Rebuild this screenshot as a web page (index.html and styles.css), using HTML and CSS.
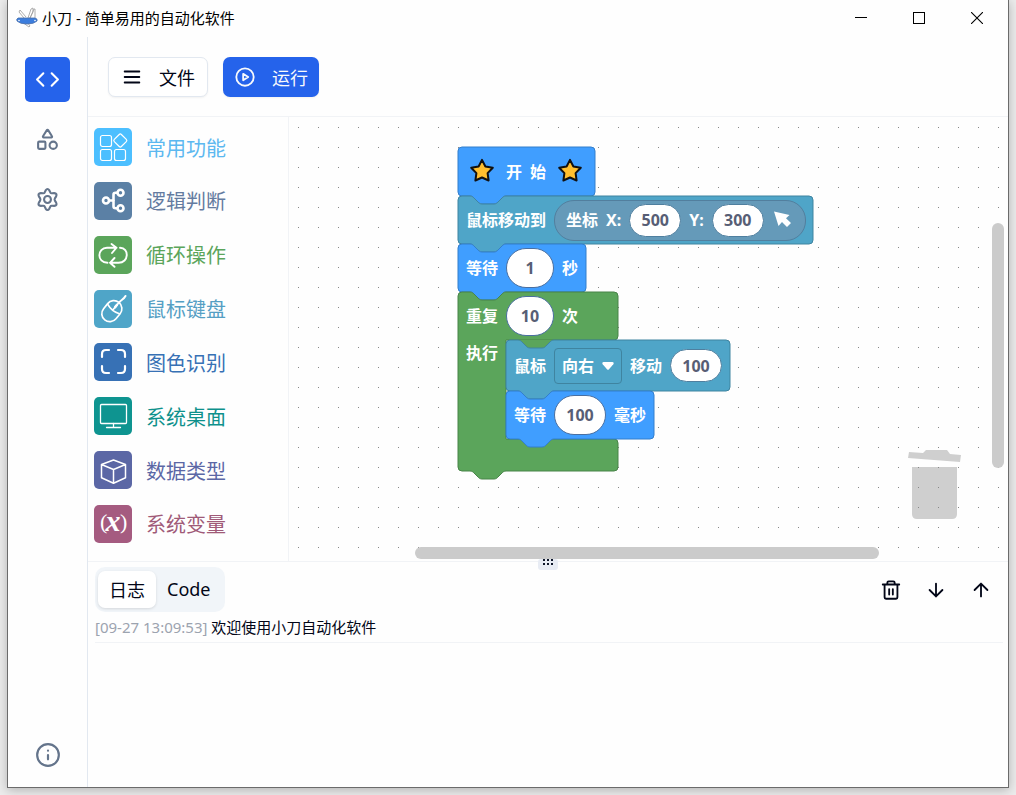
FILE: index.html
```html
<!DOCTYPE html>
<html lang="zh-CN">
<head>
    <meta charset="UTF-8">
    <meta name="viewport" content="width=device-width, initial-scale=1.0">
    <title>小刀 - 简单易用的自动化软件</title>
    <link rel="stylesheet" href="styles.css">
</head>
<body>
    <div class="window">
        <header class="titlebar">
            <svg class="logo" width="22" height="22" viewBox="0 0 22 22" fill="none" stroke="#999" stroke-width=".8">
                <path d="M8 11 3 5l1-2 6 7M12 11l3-9 2-1v4l-3 6M14 11l4-9h1v9M6 15l7 5 1-1-3-4" fill="#fff"/>
                <path d="M2 11h17q3 1 2 3-3 3-10 3T1 14q-1-2 1-3z" fill="#3b7ddd" stroke="#4a6fa8"/>
                <circle cx="3" cy="13.500" r=".8" fill="#fff" stroke="none"/>
                <circle cx="19" cy="13.500" r=".8" fill="#fff" stroke="none"/>
            </svg>
            <span class="title">小刀 - 简单易用的自动化软件</span>
            <div class="window-buttons">
                <button aria-label="最小化"><svg width="12" height="12" viewBox="0 0 12 12"><path d="M0 5h12v1H0z" fill="#000"/></svg></button>
                <button aria-label="最大化"><svg width="12" height="12" viewBox="0 0 12 12"><path d="M0 0h12v12H0zM1 1v10h10V1z" fill="#000" fill-rule="evenodd"/></svg></button>
                <button aria-label="关闭"><svg width="12" height="12" viewBox="0 0 12 12"><path d="M0 0l12 12M12 0 0 12" stroke="#000" stroke-width="1.1"/></svg></button>
            </div>
        </header>

        <div class="main">
            <nav class="rail">
                <button class="rail-button active" aria-label="代码">
                    <svg width="25" height="25" viewBox="0 0 24 24"><path d="m16 18 6-6-6-6M8 6l-6 6 6 6"/></svg>
                </button>
                <button class="rail-button" aria-label="组件">
                    <svg width="25" height="25" viewBox="0 0 24 24"><path d="M8.300 10a.7.7 0 0 1-.626-1.079L11.400 3a.7.7 0 0 1 1.198-.043L16.300 8.900a.7.7 0 0 1-.572 1.100Z"/><rect x="3" y="14" width="7" height="7" rx="1"/><circle cx="17.500" cy="17.500" r="3.500"/></svg>
                </button>
                <button class="rail-button" aria-label="设置">
                    <svg width="25" height="25" viewBox="0 0 24 24"><path d="M10.200 3.300Q12 .6 13.800 3.300L14.700 5.200Q15.200 6.100 16.300 6L18.400 5.900Q21.600 6.200 20.300 9L19.100 10.900Q18.500 12 19.100 13.100L20.300 15Q21.600 17.800 18.400 18.100L16.300 18Q15.200 17.900 14.700 18.800L13.800 20.700Q12 23.400 10.200 20.700L9.300 18.800Q8.800 17.900 7.700 18L5.600 18.100Q2.400 17.800 3.700 15L4.900 13.100Q5.500 12 4.900 10.900L3.700 9Q2.400 6.200 5.600 5.900L7.700 6Q8.800 6.100 9.300 5.200z"/><circle cx="12" cy="12" r="3.300"/></svg>
                </button>
                <button class="rail-button info" aria-label="关于">
                    <svg width="26" height="26" viewBox="0 0 24 24"><circle cx="12" cy="12" r="10"/><path d="M12 16v-4M12 8h.01"/></svg>
                </button>
            </nav>

            <div class="content">
                <div class="toolbar">
                    <button class="btn">
                        <svg width="22" height="22" viewBox="0 0 24 24"><path d="M4 6h16M4 12h16M4 18h16"/></svg>
                        文件
                    </button>
                    <button class="btn primary">
                        <svg width="22" height="22" viewBox="0 0 24 24"><circle cx="12" cy="12" r="9.500"/><path d="m10 8.500 5.500 3.500-5.500 3.500z"/></svg>
                        运行
                    </button>
                </div>

                <div class="editor">
                    <ul class="toolbox">
                        <li class="common">
                            <svg width="38" height="38" viewBox="0 0 38 38" stroke-width="1.200"><rect x="6.500" y="7.500" width="11" height="11" rx="2"/><rect x="21.300" y="7.500" width="10" height="10" rx="1.500" transform="rotate(45 26.300 12.500)"/><rect x="6.500" y="21.500" width="11" height="11" rx="2"/><rect x="20.500" y="21.500" width="11" height="11" rx="2"/></svg>
                            常用功能
                        </li>
                        <li class="logic">
                            <svg width="38" height="38" viewBox="0 0 38 38" stroke-width="2.600"><circle cx="12" cy="18.500" r="3"/><circle cx="26.500" cy="10.800" r="3"/><circle cx="26.500" cy="26.300" r="3"/><path d="M15.200 18.500h4.500M23 10.800h-1.500q-2 0-2 2v11.500q0 2 2 2H23"/></svg>
                            逻辑判断
                        </li>
                        <li class="loop">
                            <svg width="38" height="38" viewBox="0 0 38 38" stroke-width="1.900"><path d="M13.500 26.800C2.500 26.800 3 11.700 13 11.700h9.500M17.500 8l5 3.700-4.500 5.300M26 11.700c9.500.3 9 15.100-1.500 15.100H16M20.500 22 16 26.800l4.500 4"/></svg>
                            循环操作
                        </li>
                        <li class="mouse">
                            <svg width="38" height="38" viewBox="0 0 38 38" stroke-width="1.700"><g transform="rotate(39 18 21)"><rect x="10" y="10" width="16" height="22.500" rx="8"/><path d="M10.500 18.500q7.500 3 15 0M18 10v10"/><path d="M18 13v3" stroke-width="2.500"/></g><path d="M25 13c1-3 4.500-3 6.500-7" stroke-width="2"/></svg>
                            鼠标键盘
                        </li>
                        <li class="image">
                            <svg width="38" height="38" viewBox="0 0 38 38" stroke-width="2.200"><path d="M8 14v-3q0-4 4-4h3M24 7h3q4 0 4 4v3M31 23v3q0 4-4 4h-3M15 30h-3q-4 0-4-4v-3"/></svg>
                            图色识别
                        </li>
                        <li class="desktop">
                            <svg width="38" height="38" viewBox="0 0 38 38" stroke-width="1.300"><rect x="6.500" y="7.500" width="26" height="19" rx="1"/><path d="M19.500 26.500v3M12.500 30.500h14"/></svg>
                            系统桌面
                        </li>
                        <li class="data">
                            <svg width="38" height="38" viewBox="0 0 38 38" stroke-width="1.500"><path d="M19.500 9 31.500 13.500v13.200L19.500 32.200 7.500 26.700V13.500zM7.500 13.500l12 5 12-5M19.500 18.500v13.500"/></svg>
                            数据类型
                        </li>
                        <li class="variable">
                            <svg width="38" height="38" viewBox="0 0 38 38"><text class="paren" x="6" y="24">(</text><text class="letter" x="19" y="26">x</text><text class="paren" x="26" y="24">)</text></svg>
                            系统变量
                        </li>
                    </ul>

                    <div class="workspace">
                        <svg class="trash" width="54" height="72" viewBox="0 0 54 72">
                            <path d="M1 4 15 5l3-3h21l3 4 11 1-1 7L0 10z"/>
                            <path d="M4 19h45v47q0 5-5 5H9q-5 0-5-5z"/>
                        </svg>
                        <svg class="grid" width="100%" height="100%">
                            <defs><pattern id="dots" width="20" height="20" patternUnits="userSpaceOnUse"><rect x="9" y="10" width="1" height="1" fill="#888"/></pattern></defs>
                            <rect width="100%" height="100%" fill="url(#dots)"/>
                        </svg>

                        <div class="program">
                            <!-- block outlines, the fields are laid over them -->
                            <svg class="shapes" width="360" height="340" viewBox="0 0 360 340">
                                <path fill="#409eff" stroke="#337ecc" d="M0 4a4 4 0 0 1 4-4H133a4 4 0 0 1 4 4V45a4 4 0 0 1-4 4H48c-2 0-3 1-4 2l-4 4c-1 1-2 2-4 2h-12c-2 0-3-1-4-2l-4-4c-1-1-2-2-4-2H4a4 4 0 0 1-4-4z"/>
                                <path fill="#4fa5c8" stroke="#3f84a0" d="M0 53a4 4 0 0 1 4-4H12c2 0 3 1 4 2l4 4c1 1 2 2 4 2h12c2 0 3-1 4-2l4-4c1-1 2-2 4-2H351a4 4 0 0 1 4 4V93a4 4 0 0 1-4 4H48c-2 0-3 1-4 2l-4 4c-1 1-2 2-4 2h-12c-2 0-3-1-4-2l-4-4c-1-1-2-2-4-2H4a4 4 0 0 1-4-4z"/>
                                <path fill="#409eff" stroke="#337ecc" d="M0 101a4 4 0 0 1 4-4H12c2 0 3 1 4 2l4 4c1 1 2 2 4 2h12c2 0 3-1 4-2l4-4c1-1 2-2 4-2H124a4 4 0 0 1 4 4V141a4 4 0 0 1-4 4H48c-2 0-3 1-4 2l-4 4c-1 1-2 2-4 2h-12c-2 0-3-1-4-2l-4-4c-1-1-2-2-4-2H4a4 4 0 0 1-4-4z"/>
                                <path fill="#5ba55b" stroke="#498449" d="M0 149a4 4 0 0 1 4-4H12c2 0 3 1 4 2l4 4c1 1 2 2 4 2h12c2 0 3-1 4-2l4-4c1-1 2-2 4-2H156a4 4 0 0 1 4 4V189a4 4 0 0 1-4 4H48V292H156a4 4 0 0 1 4 4V320a4 4 0 0 1-4 4H48c-2 0-3 1-4 2l-4 4c-1 1-2 2-4 2h-12c-2 0-3-1-4-2l-4-4c-1-1-2-2-4-2H4a4 4 0 0 1-4-4z"/>
                                <path fill="#5ba55b" d="M60 193h36v8H60z"/>
                                <path fill="#4fa5c8" stroke="#3f84a0" d="M48 197a4 4 0 0 1 4-4H60c2 0 3 1 4 2l4 4c1 1 2 2 4 2h12c2 0 3-1 4-2l4-4c1-1 2-2 4-2H268a4 4 0 0 1 4 4V240a4 4 0 0 1-4 4H96c-2 0-3 1-4 2l-4 4c-1 1-2 2-4 2h-12c-2 0-3-1-4-2l-4-4c-1-1-2-2-4-2H52a4 4 0 0 1-4-4z"/>
                                <path fill="#409eff" stroke="#337ecc" d="M48 248a4 4 0 0 1 4-4H60c2 0 3 1 4 2l4 4c1 1 2 2 4 2h12c2 0 3-1 4-2l4-4c1-1 2-2 4-2H192a4 4 0 0 1 4 4V288a4 4 0 0 1-4 4H96c-2 0-3 1-4 2l-4 4c-1 1-2 2-4 2h-12c-2 0-3-1-4-2l-4-4c-1-1-2-2-4-2H52a4 4 0 0 1-4-4z"/>
                            </svg>

                            <div class="row start">
                                <svg width="24" height="24" viewBox="0 0 24 24"><path d="m12 .9 3.400 6.600 7.400 1.200-5.200 5.400 1 7.400L12 18.500l-6.600 3 1-7.400-5.200-5.400 7.400-1.200z"/></svg>
                                <span>开</span><span>始</span>
                                <svg width="24" height="24" viewBox="0 0 24 24"><path d="m12 .9 3.400 6.600 7.400 1.200-5.200 5.400 1 7.400L12 18.500l-6.600 3 1-7.400-5.200-5.400 7.400-1.200z"/></svg>
                            </div>
                            <div class="row">
                                <span>鼠标移动到</span>
                                <div class="coords">
                                    <span>坐标</span>
                                    <label for="pos-x">X:</label>
                                    <input class="small" id="pos-x" type="text" value="500">
                                    <label for="pos-y">Y:</label>
                                    <input class="small" id="pos-y" type="text" value="300">
                                    <svg width="24" height="24" viewBox="0 0 24 24"><path d="M2 3.500 17.500 7 14 10.200l5 4.800-4 4-5-5-3.500 4z" fill="#fff"/></svg>
                                </div>
                            </div>
                            <div class="row">
                                <label for="wait-seconds">等待</label>
                                <input id="wait-seconds" type="text" value="1">
                                <span>秒</span>
                            </div>
                            <div class="row">
                                <label for="repeat-count">重复</label>
                                <input id="repeat-count" type="text" value="10">
                                <span>次</span>
                            </div>
                            <div class="loop-body">
                                <span class="do">执行</span>
                                <div class="statements">
                                    <div class="row tall">
                                        <label for="direction">鼠标</label>
                                        <div class="dropdown">
                                            <select id="direction"><option>向右</option><option>向左</option><option>向上</option><option>向下</option></select>
                                            <svg width="12" height="8" viewBox="0 0 12 8"><path d="M1.500 0h9q2 .5.800 2.200L7 7.300q-1 1-2 0L.7 2.200Q-.5.500 1.500 0z" fill="#fff"/></svg>
                                        </div>
                                        <label for="distance">移动</label>
                                        <input class="small" id="distance" type="text" value="100">
                                    </div>
                                    <div class="row">
                                        <label for="wait-ms">等待</label>
                                        <input class="wide" id="wait-ms" type="text" value="100">
                                        <span>毫秒</span>
                                    </div>
                                </div>
                            </div>
                        </div>

                        <div class="scroll-y"></div>
                        <div class="scroll-x"></div>
                    </div>
                </div>

                <section class="panel">
                    <div class="handle">
                        <svg width="12" height="8" viewBox="0 0 12 8" fill="#0f172a"><path d="M1 0h2v2H1zM5 0h2v2H5zM9 0h2v2H9zM1 4h2v2H1zM5 4h2v2H5zM9 4h2v2H9z"/></svg>
                    </div>
                    <div class="panel-head">
                        <div class="tabs">
                            <button class="tab active">日志</button>
                            <button class="tab">Code</button>
                        </div>
                        <div class="panel-actions">
                            <button aria-label="清空"><svg width="22" height="22" viewBox="0 0 24 24"><path d="M3 6h18M19 6v14q0 1.500-1.500 1.500h-11Q5 21.500 5 20V6M8 6V4q0-1.500 1.500-1.500h5Q16 2.500 16 4v2M10 11v6M14 11v6"/></svg></button>
                            <button aria-label="滚动到底部"><svg width="22" height="22" viewBox="0 0 24 24"><path d="M12 5v14M19 12l-7 7-7-7"/></svg></button>
                            <button aria-label="滚动到顶部"><svg width="22" height="22" viewBox="0 0 24 24"><path d="M12 19V5M5 12l7-7 7 7"/></svg></button>
                        </div>
                    </div>
                    <p class="log"><time>[09-27 13:09:53]</time> 欢迎使用小刀自动化软件</p>
                </section>
            </div>
        </div>
    </div>
</body>
</html>
```

FILE: styles.css
```css
* {
    box-sizing: border-box;
}

body {
    margin: 0;
    padding: 0 7px 7px;
    height: 100vh;
    background-color: #ececec;
    font-family: "Noto Sans", "Noto Sans CJK SC", sans-serif;
    font-size: 15px;
    color: #020617;
    overflow: hidden;
}

button, input, select {
    font: inherit;
    color: inherit;
    margin: 0;
}

button {
    display: flex;
    align-items: center;
    justify-content: center;
    padding: 0;
    border: none;
    background: none;
    cursor: pointer;
}

svg {
    display: block;
    flex: none;
}

.window {
    display: flex;
    flex-direction: column;
    height: 100%;
    background-color: #fefefe;
    border: 1px solid #6b6b6b;
    border-top: none;
    box-shadow: 0 2px 10px rgba(0, 0, 0, 0.25);
}

/* title bar */
.titlebar {
    display: flex;
    align-items: center;
    height: 37px;
    padding: 0 2px 2px 8px;
}

.title {
    margin-left: 4px;
    color: #000;
}

.window-buttons {
    display: flex;
    margin-left: auto;
}

.window-buttons button {
    width: 58px;
    height: 35px;
}

.main {
    display: flex;
    flex: 1;
    min-height: 0;
}

/* left icon rail */
.rail {
    display: flex;
    flex-direction: column;
    align-items: center;
    gap: 15px;
    width: 80px;
    padding: 20px 0 10px;
    border-right: 1px solid #e2e8f0;
}

.rail-button {
    width: 45px;
    height: 45px;
    border-radius: 5px;
    color: #64748b;
}

.rail-button.active {
    background-color: #2563eb;
    color: #fff;
}

.rail-button.info {
    margin-top: auto;
}

.rail svg, .toolbar svg, .panel-actions svg {
    fill: none;
    stroke: currentColor;
    stroke-width: 2;
    stroke-linecap: round;
    stroke-linejoin: round;
}

.content {
    display: flex;
    flex-direction: column;
    flex: 1;
    min-width: 0;
}

.toolbar {
    display: flex;
    gap: 15px;
    padding: 20px 20px 19px;
    border-bottom: 1px solid #f1f3f6;
}

.btn {
    gap: 16px;
    height: 40px;
    padding: 0 12px 1px;
    border: 1px solid #e2e8f0;
    border-radius: 7px;
    background-color: #fff;
    font-size: 18px;
    box-shadow: 0 1px 2px rgba(0, 0, 0, 0.05);
}

.btn.primary {
    padding: 0 11px 1px;
    border: none;
    background-color: #2563eb;
    color: #f8fafc;
}

.editor {
    display: flex;
    flex: 1;
    min-height: 0;
}

/* block categories */
.toolbox {
    display: flex;
    flex-direction: column;
    justify-content: space-between;
    width: 201px;
    margin: 0;
    padding: 11px 6px 18px;
    list-style: none;
    border-right: 1px solid #f1f3f6;
    font-size: 20px;
}

.toolbox li {
    display: flex;
    align-items: center;
    gap: 14px;
    height: 38px;
}

.toolbox svg {
    border-radius: 5px;
    fill: none;
    stroke: #fff;
    stroke-linecap: round;
    stroke-linejoin: round;
}

.toolbox text {
    fill: #fff;
    stroke: none;
    font-family: "Liberation Serif", serif;
}

.toolbox .paren {
    font-size: 22px;
}

.toolbox .letter {
    font-size: 30px;
    font-weight: bold;
    font-style: italic;
    text-anchor: middle;
}

.common { color: #5cb8f0; }
.common svg { background-color: #4cbfff; }
.logic { color: #647ba0; }
.logic svg { background-color: #5b80a5; }
.loop { color: #5ba55b; }
.loop svg { background-color: #5ba55b; }
.mouse { color: #559fc4; }
.mouse svg { background-color: #4fa5c8; }
.image { color: #3771b5; }
.image svg { background-color: #3771b5; }
.desktop { color: #0e918c; }
.desktop svg { background-color: #0e9490; }
.data { color: #5b67a5; }
.data svg { background-color: #5b67a5; }
.variable { color: #a05a78; }
.variable svg { background-color: #a55b80; }

/* block canvas */
.workspace {
    position: relative;
    flex: 1;
    overflow: hidden;
}

.grid {
    position: absolute;
    inset: 0;
}

.trash {
    position: absolute;
    right: 46px;
    bottom: 41px;
    fill: #cfcfcf;
}

.program {
    position: absolute;
    left: 169px;
    top: 30px;
    color: #fff;
    font-size: 16px;
    font-weight: bold;
    line-height: 20px;
}

.shapes {
    position: absolute;
    left: 0;
    top: 0;
    overflow: visible;
}

.row {
    position: relative;
    display: flex;
    align-items: center;
    gap: 8px;
    height: 48px;
    padding: 0 8px;
    white-space: nowrap;
}

.row.start {
    height: 49px;
    padding: 0 12px 2px;
}

.start svg {
    fill: #ffbf2f;
    stroke: #111;
    stroke-width: 2;
    stroke-linejoin: round;
    overflow: visible;
}

.start span {
    padding-top: 2px;
}

.start span:first-of-type {
    margin-left: 4px;
}

.start span:last-of-type {
    margin-right: 4px;
}

.row.tall {
    height: 51px;
}

.row input {
    width: 48px;
    height: 40px;
    padding: 0;
    border: 1px solid #4a6fa0;
    border-radius: 20px;
    background-color: #fff;
    color: #575e75;
    text-align: center;
}

.row input.wide {
    width: 52px;
}

.row input.small {
    width: 52px;
    height: 33px;
    border-color: #4f7f9f;
}

.coords {
    display: flex;
    align-items: center;
    gap: 8px;
    height: 41px;
    padding: 0 9px 0 11px;
    border: 1px solid #527f9e;
    border-radius: 20px;
    background-color: #659ab9;
}

.dropdown {
    position: relative;
}

.dropdown select {
    display: block;
    width: 68px;
    height: 36px;
    padding: 0 7px;
    border: 1px solid #3f84a0;
    border-radius: 4px;
    background: none;
    appearance: none;
}

.dropdown svg {
    position: absolute;
    right: 8px;
    top: 14px;
}

.loop-body {
    position: relative;
    display: flex;
}

.do {
    width: 48px;
    padding: 3px 0 0 8px;
}

.scroll-x, .scroll-y {
    position: absolute;
    border-radius: 6px;
    background-color: #cbcbcb;
}

.scroll-x {
    left: 126px;
    right: 129px;
    bottom: 2px;
    height: 12px;
}

.scroll-y {
    top: 106px;
    bottom: 93px;
    right: 4px;
    width: 12px;
}

/* log panel */
.panel {
    position: relative;
    height: 226px;
    padding: 5px 5px 0 7px;
    border-top: 1px solid #f1f3f6;
}

.handle {
    position: absolute;
    left: 50%;
    top: -3px;
    display: flex;
    justify-content: center;
    width: 20px;
    height: 11px;
    margin-left: -10px;
    border-radius: 3px;
    background-color: #e8ecf4;
}

.panel-head {
    display: flex;
    justify-content: space-between;
    align-items: center;
}

.tabs {
    display: flex;
    padding: 4px 3px;
    border-radius: 10px;
    background-color: #f1f5f9;
}

.tab {
    height: 37px;
    padding: 0 11px 2px;
    border-radius: 7px;
    font-size: 18px;
}

.tab.active {
    background-color: #fff;
    box-shadow: 0 1px 3px rgba(0, 0, 0, 0.12);
}

.panel-actions {
    display: flex;
}

.panel-actions button {
    width: 45px;
    height: 45px;
}

.log {
    margin: 0;
    line-height: 30px;
    border-bottom: 1px solid #f1f3f6;
}

.log time {
    color: #9ca3af;
}
```
